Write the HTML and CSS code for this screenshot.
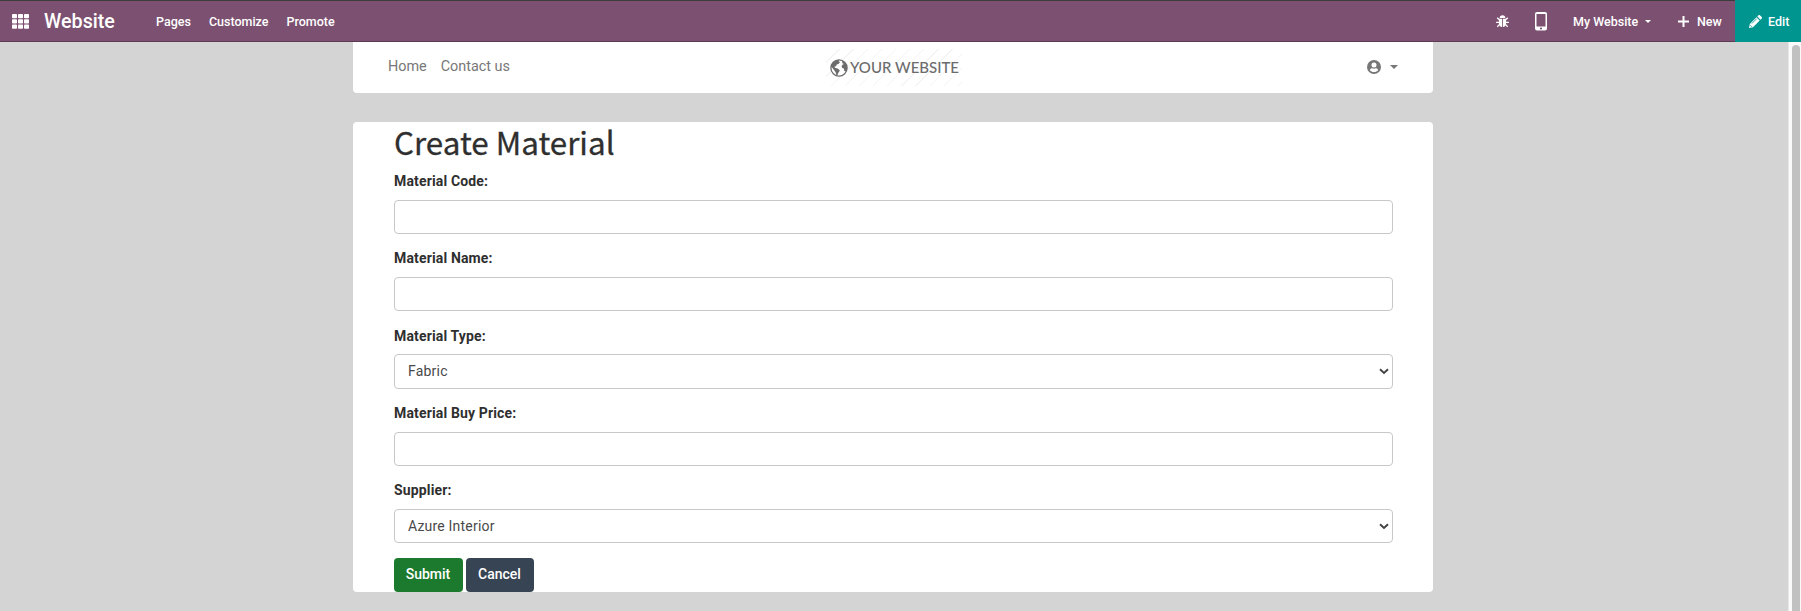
FILE: index.html
```html
<!DOCTYPE html>
<html lang="en">
<head>
<meta charset="utf-8">
<title>Create Material</title>
<link rel="stylesheet" href="styles.css">
</head>
<body>
<header class="topbar">
  <svg class="apps" width="17" height="15" viewBox="0 0 17 15" fill="#fff"><rect width="5" height="4.3" rx=".8"/><rect x="6" width="5" height="4.3" rx=".8"/><rect x="12" width="5" height="4.3" rx=".8"/><rect y="5.2" width="5" height="4.3" rx=".8"/><rect x="6" y="5.2" width="5" height="4.3" rx=".8"/><rect x="12" y="5.2" width="5" height="4.3" rx=".8"/><rect y="10.4" width="5" height="4.3" rx=".8"/><rect x="6" y="10.4" width="5" height="4.3" rx=".8"/><rect x="12" y="10.4" width="5" height="4.3" rx=".8"/></svg>
  <a class="brand">Website</a>
  <nav class="menu"><a>Pages</a><a>Customize</a><a>Promote</a></nav>
  <div class="tools">
    <svg class="bug" width="13" height="13" viewBox="0 0 13 13" fill="none" stroke="#fff" stroke-width="1.3"><path d="M3.700 3.100a2.800 2.800 0 0 1 5.600 0z" fill="#fff" stroke="none"/><path d="M2.900 3.800h3.200v8.200C4.200 11.800 2.900 10.500 2.900 8.500zM10.100 3.800H6.900v8.200c1.900-.2 3.200-1.500 3.200-3.500z" fill="#fff" stroke="none"/><path d="M3.300 4.800 1.200 2.700M9.700 4.800l2.100-2.100M3 7.300H.1M10 7.300h2.900M3.500 9.500l-2.200 2.200M9.500 9.500l2.200 2.200"/></svg>
    <svg class="phone" width="12" height="19" viewBox="0 0 12 19"><path fill="#fff" fill-rule="evenodd" d="M2 0h8a2 2 0 0 1 2 2v14.500a2 2 0 0 1-2 2H2a2 2 0 0 1-2-2V2a2 2 0 0 1 2-2zM1.500 2v12.500h9V2zM6 15.400a1.100 1.100 0 1 0 0 2.200 1.100 1.100 0 0 0 0-2.200z"/></svg>
    <a class="site">My Website</a><i class="caret caret-site"></i>
    <svg class="plus" width="11" height="11" viewBox="0 0 11 11"><path d="M5.500 0v11M0 5.500h11" stroke="#fff" stroke-width="2"/></svg>
    <a class="new">New</a>
    <a class="edit"><svg width="13" height="13" viewBox="0 0 13 13"><path fill="#fff" d="M0 13l.8-4L7.500 2.300l3.200 3.200L4 12.200zM8.300 1.500 9.500.3a1 1 0 0 1 1.400 0l1.800 1.800a1 1 0 0 1 0 1.400l-1.200 1.200z"/><path d="M2.900 8.500 7.700 3.700M1.300 10.200l1.600 1.600" stroke="#00968f" stroke-width=".8"/></svg>Edit</a>
  </div>
</header>
<div class="viewport">
  <div class="page">
    <div class="sitebar">
      <nav class="links"><a>Home</a><a>Contact us</a></nav>
      <div class="logo">
        <svg class="globe" width="18" height="18" viewBox="0 0 18 18"><circle cx="9" cy="9" r="8.100" fill="#fff" stroke="#6c6c6c" stroke-width="1.300"/><path fill="#6c6c6c" d="M2 4.500 5 1.700l4-.9-.4 1.400 1.400.8-1.200 1.800-2 .7-.9 1.800-1.600.5 1 1.200 2.400.6 2.200 1.900-1.400 2-1 2.600-1.100.1-.8-3-1.400-2L2.500 9 1 7.500zM12 1.500l2.500 1.700 2.200 3.300.4 3-1.600 3.200-1.300-1-.3-2.200-1.700-.6-.6-1.900 1.200-1.500 1.200-.6-1.600-.7z"/></svg><span>YOUR WEBSITE</span>
      </div>
      <div class="account">
        <svg width="14" height="14" viewBox="0 0 14 14"><circle cx="7" cy="7" r="7" fill="#777"/><circle cx="7" cy="5.100" r="2.500" fill="#fff"/><path fill="#fff" d="M2.900 10.200c.3-1.400 1.200-2 2.200-2 1.200.6 2.600.6 3.800 0 1 0 1.900.6 2.200 2C9.400 12.600 4.600 12.600 2.900 10.200z"/></svg>
        <i class="caret"></i>
      </div>
    </div>
    <main class="card">
      <h1>Create Material</h1>
      <form>
        <div class="group"><label for="code">Material Code:</label><input class="control" id="code" type="text"></div>
        <div class="group"><label for="name">Material Name:</label><input class="control" id="name" type="text"></div>
        <div class="group"><label for="type">Material Type:</label><div class="select"><select class="control type" id="type"><option>Fabric</option></select><svg class="chevron" width="10" height="7" viewBox="0 0 10 7"><path d="M1 1.300l4 3.700 4-3.700" fill="none" stroke="#444" stroke-width="2"/></svg></div></div>
        <div class="group"><label for="price">Material Buy Price:</label><input class="control" id="price" type="text"></div>
        <div class="group"><label for="supplier">Supplier:</label><div class="select"><select class="control" id="supplier"><option>Azure Interior</option></select><svg class="chevron" width="10" height="7" viewBox="0 0 10 7"><path d="M1 1.300l4 3.700 4-3.700" fill="none" stroke="#444" stroke-width="2"/></svg></div></div>
        <div class="actions"><button class="btn submit" type="button">Submit</button><button class="btn cancel" type="button">Cancel</button></div>
      </form>
    </main>
  </div>
  <div class="track"><div class="thumb"></div></div>
</div>
</body>
</html>
```
FILE: styles.css
```css
* { box-sizing: border-box; }
body { margin: 0; height: 611px; overflow: hidden; display: flex; flex-direction: column; font-family: Roboto, sans-serif; font-size: 14px; color: #2f2f2f; background: #d4d4d4; }
.topbar { flex: none; height: 42px; display: flex; align-items: center; background: #7c5070; border-top: 1px solid #3c3c3c; border-bottom: 1px solid #5c3a54; padding-left: 12px; color: #fff; font-size: 12.5px; font-weight: 500; }
.brand { width: 112px; margin-left: 15px; font-size: 19.7px; }
.menu { display: flex; gap: 18px; padding-top: 1px; }
.tools { display: flex; align-items: center; margin-left: auto; height: 42px; white-space: nowrap; }
.bug { margin-right: 26px; }
.phone { margin-right: 26px; }
.site { width: 72px; }
.caret { width: 0; height: 0; border: 4px solid transparent; border-top-color: #777; border-bottom: 0; }
.caret-site { border-width: 3px 3px 0; border-top-color: #fff; margin: 0 27px 0 0; }
.plus { margin-right: 8px; }
.new { width: 38px; }
.edit { display: flex; align-items: center; gap: 6px; width: 66px; height: 42px; padding-left: 14px; background: #00968f; }
.viewport { flex: 1; display: flex; min-height: 0; }
.page { flex: 1; padding-left: 353px; }
.sitebar { width: 1080px; height: 51px; display: grid; grid-template-columns: 473px 1fr 67px; align-items: center; background: #fff; border-radius: 0 0 4px 4px; color: #777; }
.links { display: flex; gap: 14px; padding: 0 0 2px 35px; font-size: 14.4px; }
.logo { display: flex; align-items: center; justify-self: start; gap: 2px; width: 136px; height: 37px; padding-left: 4px; background: repeating-linear-gradient(135deg, #fff 0 9px, #f4f4f4 9px 10px); font: 500 15px Lato, sans-serif; color: #6c6c6c; white-space: nowrap; }
.logo span { padding-bottom: 1px; }
.globe { flex: none; }
.account { display: flex; align-items: center; gap: 9px; padding: 0 0 2px 1px; }
.card { width: 1080px; height: 470px; margin-top: 29px; padding: 0 40px 0 41px; background: #fff; border-radius: 4px; }
h1 { margin: 0 0 9px; height: 40px; font: 400 31.4px/40px "Noto Sans CJK JP", sans-serif; -webkit-text-stroke: .3px #2f2f2f; }
.group { height: 77.3px; }
label { display: block; height: 20px; line-height: 20px; margin-bottom: 9px; font-weight: 700; letter-spacing: .15px; }
.control { display: block; width: 999px; height: 34px; padding: 0 13px; border: 1px solid #c8c8c8; border-radius: 4px; background: #fff; font: 14px Roboto, sans-serif; letter-spacing: .2px; color: #494949; }
.select { position: relative; }
select.control { appearance: none; }
select.type { height: 35px; margin-top: -.6px; padding-bottom: 1px; }
.chevron { position: absolute; right: 4px; top: 14px; }
.actions { display: flex; gap: 3px; padding-top: .5px; }
.btn { height: 34px; padding: 0 1px 2px 0; border: 0; border-radius: 4px; color: #fff; font: 500 14px Roboto, sans-serif; }
.submit { width: 69px; background: #1c7a2e; }
.cancel { width: 68px; background: #374453; }
.track { width: 13px; padding: 3px 1px 0 3px; background: #fafafa; border-left: 1px solid #e8e8e8; }
.thumb { width: 8px; height: 580px; border-radius: 4px 4px 0 0; background: #c1c1c1; }
```
